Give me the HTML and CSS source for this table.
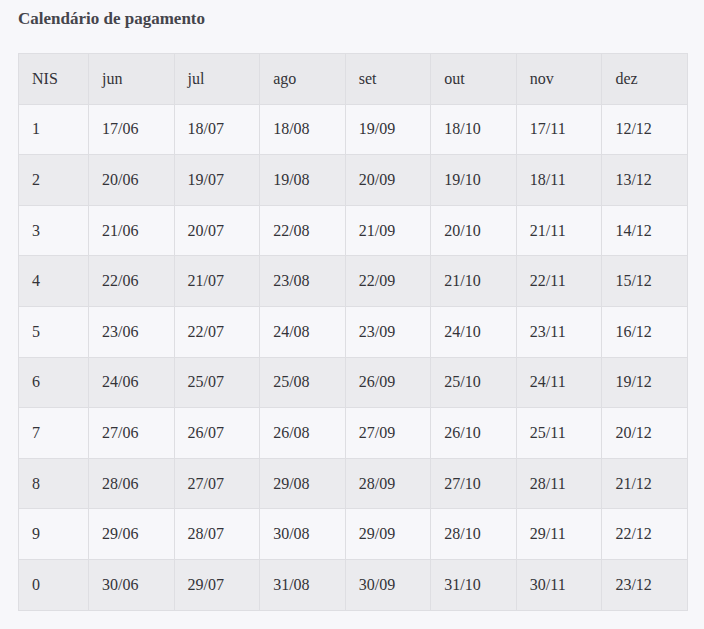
FILE: index.html
```html
<!DOCTYPE html>
<html lang="pt">
<head>
<meta charset="utf-8">
<link rel="stylesheet" href="styles.css">
</head>
<body>
<h3 class="title">Calendário de pagamento</h3>
<table class="cal">
<colgroup><col class="c-nis"><col><col><col><col><col><col><col></colgroup>
<thead>
<tr><th>NIS</th><th>jun</th><th>jul</th><th>ago</th><th>set</th><th>out</th><th>nov</th><th>dez</th></tr>
</thead>
<tbody>
<tr><td>1</td><td>17/06</td><td>18/07</td><td>18/08</td><td>19/09</td><td>18/10</td><td>17/11</td><td>12/12</td></tr>
<tr><td>2</td><td>20/06</td><td>19/07</td><td>19/08</td><td>20/09</td><td>19/10</td><td>18/11</td><td>13/12</td></tr>
<tr><td>3</td><td>21/06</td><td>20/07</td><td>22/08</td><td>21/09</td><td>20/10</td><td>21/11</td><td>14/12</td></tr>
<tr><td>4</td><td>22/06</td><td>21/07</td><td>23/08</td><td>22/09</td><td>21/10</td><td>22/11</td><td>15/12</td></tr>
<tr><td>5</td><td>23/06</td><td>22/07</td><td>24/08</td><td>23/09</td><td>24/10</td><td>23/11</td><td>16/12</td></tr>
<tr><td>6</td><td>24/06</td><td>25/07</td><td>25/08</td><td>26/09</td><td>25/10</td><td>24/11</td><td>19/12</td></tr>
<tr><td>7</td><td>27/06</td><td>26/07</td><td>26/08</td><td>27/09</td><td>26/10</td><td>25/11</td><td>20/12</td></tr>
<tr><td>8</td><td>28/06</td><td>27/07</td><td>29/08</td><td>28/09</td><td>27/10</td><td>28/11</td><td>21/12</td></tr>
<tr><td>9</td><td>29/06</td><td>28/07</td><td>30/08</td><td>29/09</td><td>28/10</td><td>29/11</td><td>22/12</td></tr>
<tr><td>0</td><td>30/06</td><td>29/07</td><td>31/08</td><td>30/09</td><td>31/10</td><td>30/11</td><td>23/12</td></tr>
</tbody>
</table>
</body>
</html>
```
FILE: styles.css
```css
html, body {
  margin: 0;
  background: #f7f7fa;
}
body {
  padding: 8px 16px 0 18px;
  font-family: "Liberation Serif", "Times New Roman", serif;
  color: #333338;
}
.title {
  margin: 0;
  font-size: 17px;
  font-weight: bold;
  line-height: 22px;
  color: #45454c;
}
.cal {
  margin-top: 23px;
  width: 670px;
  border-collapse: collapse;
  table-layout: fixed;
  font-size: 16px;
  border: 1px solid #dedee2;
}
.c-nis { width: 70px; }
.cal th, .cal td {
  border: 1px solid #dedee2;
  height: 50.6px;
  padding: 0 13px;
  text-align: left;
  font-weight: normal;
  box-sizing: border-box;
}
.cal thead tr { background: #e9e9ec; }
.cal tbody tr:nth-child(odd) { background: #f7f7fa; }
.cal tbody tr:nth-child(even) { background: #ebebee; }
```
